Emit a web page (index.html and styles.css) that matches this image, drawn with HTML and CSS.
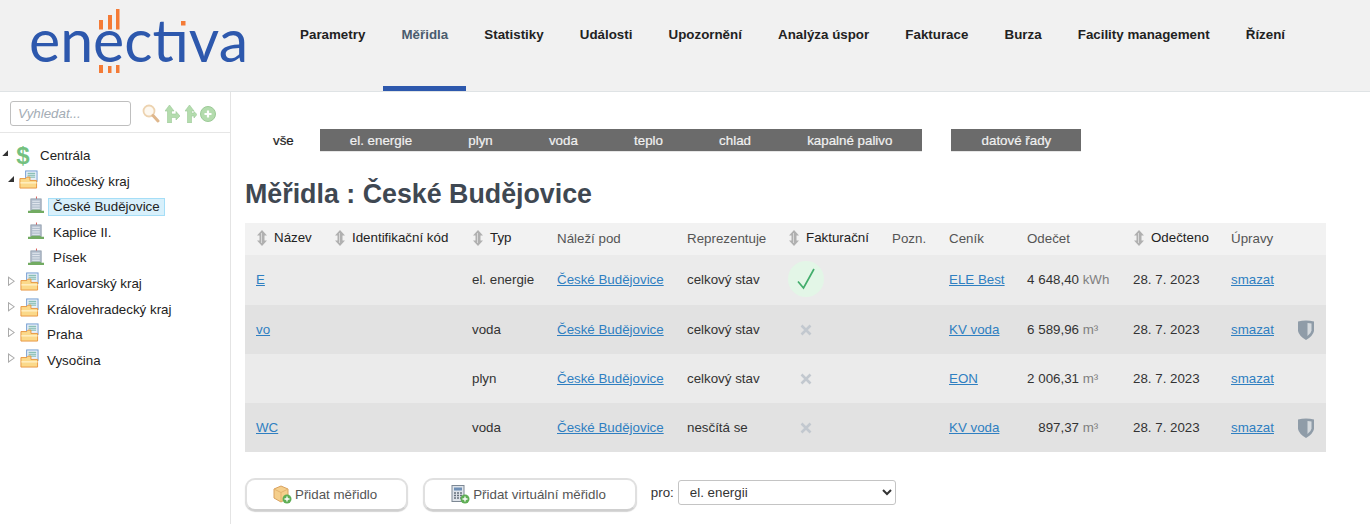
FILE: index.html
```html
<!DOCTYPE html>
<html lang="cs">
<head>
<meta charset="utf-8">
<title>Měřidla : České Budějovice</title>
<link rel="stylesheet" href="styles.css">
</head>
<body>
<svg class="defs" width="0" height="0" aria-hidden="true">
  <symbol id="sort" viewBox="0 0 12 16">
    <path d="M6 0 11 5.500H8.500v5H11L6 16 1 10.500H3.500v-5H1Z" fill="#b0b0b0"/>
    <path d="M5.500 3v10" stroke="#d8d8d8" stroke-width="1"/>
  </symbol>
  <symbol id="folder" viewBox="0 0 20 20">
    <rect x="7" y="1" width="12" height="11" fill="#e8f0fa" stroke="#6f9bd0"/>
    <path d="M9 3.500h8M9 5.500h8M9 7.500h8" stroke="#6fb1a0"/>
    <path d="M1 9h6l1.500-1.500h3V11h7v8H1Z" fill="#fbd98a" stroke="#e8963f"/>
    <path d="M1.500 13.500h17" stroke="#fff0c4" stroke-width="1.500"/>
  </symbol>
  <symbol id="building" viewBox="0 0 17 18">
    <path d="M9 0v3" stroke="#d9534f"/>
    <rect x="3" y="2.500" width="11" height="13" fill="#b3bfcd" stroke="#8a97a6" stroke-width=".8"/>
    <path d="M4.500 5h8M4.500 7.500h8M4.500 10h8M4.500 12.500h8" stroke="#e6ecf2"/>
    <path d="M0 17.500h17v-2.500h-3l-1-1H4l-1 1H0Z" fill="#72ab62"/>
  </symbol>
  <symbol id="shield" viewBox="0 0 16 20">
    <path d="M0 1.500Q8-.5 16 1.500V11Q15 16 8 20 1 16 0 11Z" fill="#8f9ca8"/>
    <path d="M9.500 3Q12 3 13.500 3.500V10.500Q13 13.500 9.500 16Z" fill="#d5dade"/>
  </symbol>
  <symbol id="cross" viewBox="0 0 12 12">
    <path d="M1.500 1.500 10.500 10.500M10.500 1.500 1.500 10.500" stroke="#c2c8cf" stroke-width="2.600"/>
  </symbol>
</svg>

<header class="top">
  <a class="logo" href="#">
    <svg width="282" height="91" viewBox="0 0 282 91" role="img" aria-label="Enectiva">
      <text x="29" y="62" class="logo-word" textLength="219" lengthAdjust="spacingAndGlyphs">enectiva</text>
      <rect x="176" y="14" width="14" height="14" fill="#f1f1f1"/>
      <rect x="181" y="21" width="4.500" height="4.500" fill="#f47b36"/>
      <path d="M99 20h4v9.500h-4ZM108 15h4v14.500h-4ZM116 9h3.500v20.500H116ZM99 65h4v8h-4ZM108 66h3.500v7H108ZM116 65h3.500v8H116Z" fill="#f47b36"/>
    </svg>
  </a>
  <nav class="menu">
    <a href="#">Parametry</a>
    <a href="#" class="active">Měřidla</a>
    <a href="#">Statistiky</a>
    <a href="#">Události</a>
    <a href="#">Upozornění</a>
    <a href="#">Analýza úspor</a>
    <a href="#">Fakturace</a>
    <a href="#">Burza</a>
    <a href="#">Facility management</a>
    <a href="#">Řízení</a>
  </nav>
</header>

<div class="page">
  <aside class="side">
    <div class="search">
      <input class="search-input" type="text" placeholder="Vyhledat...">
      <div class="tools">
        <svg width="18" height="19" viewBox="0 0 18 19"><circle cx="7" cy="7" r="5.500" fill="#fdf8f0" stroke="#edd3b0" stroke-width="1.800"/><path d="M11 11.500 16 17" stroke="#dfb78c" stroke-width="3" stroke-linecap="round"/></svg>
        <svg class="t1" width="15" height="18" viewBox="0 0 15 18"><path d="M4.500 0 9 6H6.500V9H11V6.500L15 11 11 15V12.500H6.500V18H2.500V6H0Z" fill="#b4dcae" stroke="#9cca97" stroke-width=".6"/></svg>
        <svg class="t2" width="12" height="18" viewBox="0 0 12 18"><path d="M4.500 0 9 6H6.500V8H9V6.500L12 9.500 9 13V11H6.500V18H2.500V6H0Z" fill="#b4dcae" stroke="#9cca97" stroke-width=".6"/></svg>
        <svg class="t3" width="16" height="16" viewBox="0 0 16 16"><circle cx="8" cy="8" r="7.500" fill="#b4dcae" stroke="#9cca97"/><path d="M8 4.500v7M4.500 8h7" stroke="#fff" stroke-width="2.200"/></svg>
      </div>
    </div>
    <div class="tree">
      <div class="node n0"><span class="open"></span><span class="dollar">$</span><span class="label">Centrála</span></div>
      <div class="node n1"><span class="open"></span><svg class="ico"><use href="#folder"/></svg><span class="label">Jihočeský kraj</span></div>
      <div class="node n2"><svg class="bld"><use href="#building"/></svg><span class="label selected">České Budějovice</span></div>
      <div class="node n2"><svg class="bld"><use href="#building"/></svg><span class="label">Kaplice II.</span></div>
      <div class="node n2"><svg class="bld"><use href="#building"/></svg><span class="label">Písek</span></div>
      <div class="node n1"><span class="closed"></span><svg class="ico"><use href="#folder"/></svg><span class="label">Karlovarský kraj</span></div>
      <div class="node n1"><span class="closed"></span><svg class="ico"><use href="#folder"/></svg><span class="label">Královehradecký kraj</span></div>
      <div class="node n1"><span class="closed"></span><svg class="ico"><use href="#folder"/></svg><span class="label">Praha</span></div>
      <div class="node n1"><span class="closed"></span><svg class="ico"><use href="#folder"/></svg><span class="label">Vysočina</span></div>
    </div>
  </aside>

  <main class="main">
    <div class="tabs">
      <a href="#" class="tab-all">vše</a>
      <div class="tab-bar">
        <a href="#">el. energie</a><a href="#">plyn</a><a href="#">voda</a><a href="#">teplo</a><a href="#">chlad</a><a href="#">kapalné palivo</a>
      </div>
      <div class="tab-bar second"><a href="#">datové řady</a></div>
    </div>

    <h1 class="title">Měřidla : České Budějovice</h1>

    <table class="grid">
      <colgroup>
        <col class="c1"><col class="c2"><col class="c3"><col class="c4"><col class="c5"><col class="c6"><col class="c7"><col class="c8"><col class="c9"><col class="c10"><col class="c11"><col class="c12">
      </colgroup>
      <thead>
        <tr>
          <th class="sortable"><svg class="sort"><use href="#sort"/></svg>Název</th>
          <th class="sortable"><svg class="sort"><use href="#sort"/></svg>Identifikační kód</th>
          <th class="sortable"><svg class="sort"><use href="#sort"/></svg>Typ</th>
          <th>Náleží pod</th>
          <th>Reprezentuje</th>
          <th class="sortable"><svg class="sort"><use href="#sort"/></svg>Fakturační</th>
          <th>Pozn.</th>
          <th>Ceník</th>
          <th>Odečet</th>
          <th class="sortable"><svg class="sort"><use href="#sort"/></svg>Odečteno</th>
          <th>Úpravy</th>
          <th></th>
        </tr>
      </thead>
      <tbody>
        <tr class="first">
          <td><a href="#">E</a></td><td></td><td>el. energie</td><td><a href="#">České Budějovice</a></td><td>celkový stav</td>
          <td class="mark"><span class="yes"><svg width="20" height="24" viewBox="0 0 20 24"><path d="M2 14.500 7.500 21 18 2" fill="none" stroke="#43ad6c" stroke-width="1.700"/></svg></span></td>
          <td></td><td><a href="#">ELE Best</a></td><td><span class="num">4 648,40</span> <span class="unit">kWh</span></td><td>28. 7. 2023</td><td><a href="#">smazat</a></td><td></td>
        </tr>
        <tr>
          <td><a href="#">vo</a></td><td></td><td>voda</td><td><a href="#">České Budějovice</a></td><td>celkový stav</td>
          <td class="mark"><svg class="no"><use href="#cross"/></svg></td>
          <td></td><td><a href="#">KV voda</a></td><td><span class="num">6 589,96</span> <span class="unit">m³</span></td><td>28. 7. 2023</td><td><a href="#">smazat</a></td><td class="lock"><svg class="shield"><use href="#shield"/></svg></td>
        </tr>
        <tr>
          <td></td><td></td><td>plyn</td><td><a href="#">České Budějovice</a></td><td>celkový stav</td>
          <td class="mark"><svg class="no"><use href="#cross"/></svg></td>
          <td></td><td><a href="#">EON</a></td><td><span class="num">2 006,31</span> <span class="unit">m³</span></td><td>28. 7. 2023</td><td><a href="#">smazat</a></td><td></td>
        </tr>
        <tr class="last">
          <td><a href="#">WC</a></td><td></td><td>voda</td><td><a href="#">České Budějovice</a></td><td>nesčítá se</td>
          <td class="mark"><svg class="no"><use href="#cross"/></svg></td>
          <td></td><td><a href="#">KV voda</a></td><td><span class="num">897,37</span> <span class="unit">m³</span></td><td>28. 7. 2023</td><td><a href="#">smazat</a></td><td class="lock"><svg class="shield"><use href="#shield"/></svg></td>
        </tr>
      </tbody>
    </table>

    <div class="actions">
      <a href="#" class="btn">
        <svg width="19" height="19" viewBox="0 0 19 19"><path d="M8 1 15 4V13L8 17 1 13V4Z" fill="#f5cf8c" stroke="#d9a25f"/><path d="M1 4 8 7.500 15 4M8 7.500V17" fill="none" stroke="#e3b36f"/><circle cx="14" cy="14" r="4.500" fill="#5fae55"/><path d="M14 11.500v5M11.500 14h5" stroke="#fff" stroke-width="1.300"/></svg>
        Přidat měřidlo
      </a>
      <a href="#" class="btn">
        <svg width="19" height="19" viewBox="0 0 19 19"><rect x="1" y="0.500" width="12" height="16" fill="#dfe4ea" stroke="#7d8894"/><rect x="3" y="2.500" width="8" height="3" fill="#6f8fb5"/><path d="M3 8h2M6 8h2M9 8h2M3 10.500h2M6 10.500h2M9 10.500h2M3 13h2M6 13h2M9 13h2" stroke="#66707c" stroke-width="1.300"/><circle cx="14" cy="14" r="4.500" fill="#5fae55"/><path d="M14 11.500v5M11.500 14h5" stroke="#fff" stroke-width="1.300"/></svg>
        Přidat virtuální měřidlo
      </a>
      <label class="pick">pro:
        <select class="pick-select"><option>el. energii</option></select>
      </label>
    </div>
  </main>
</div>
</body>
</html>
```

FILE: styles.css
```css
* { box-sizing: border-box; }
html, body { height: 100%; }
body {
  margin: 0;
  overflow: hidden;
  display: flex;
  flex-direction: column;
  background: #fff;
  color: #333;
  font-family: "Liberation Sans", Arial, sans-serif;
  font-size: 13.33px;
}
.defs { position: absolute; }
a { color: inherit; text-decoration: none; }

/* header */
.top {
  display: flex;
  height: 92px;
  flex: none;
  background: #f1f1f1;
  border-bottom: 1px solid #dfe3e5;
}
.logo { display: block; width: 282px; height: 91px; flex: none; }
.logo-word {
  font-family: Lato, "Open Sans", sans-serif;
  font-size: 60px;
  font-weight: 400;
  fill: #2d58ad;
}
.menu { display: flex; }
.menu a {
  height: 91px;
  padding: 27px 18.1px 0;
  font-weight: 700;
  color: #222;
  line-height: 16px;
}
.menu a.active {
  color: #4a5c6e;
  border-bottom: 5px solid #2d58ad;
}

/* layout */
.page { display: flex; flex: 1; min-height: 0; }
.side {
  width: 231px;
  flex: none;
  border-right: 1px solid #e4e4e4;
}
.search {
  display: flex;
  align-items: center;
  height: 41px;
  padding: 3px 0 0 10px;
  border-bottom: 1px solid #e6e6e6;
}
.search-input {
  width: 121px;
  height: 25px;
  padding: 0 7px;
  border: 1px solid #bfbfbf;
  border-radius: 3px;
  font: italic 13.33px "Liberation Sans", Arial, sans-serif;
}
.search-input::placeholder { color: #a3acb5; opacity: 1; }
.tools { display: flex; align-items: center; margin-left: 11px; }
.tools .t1 { margin-left: 5px; }
.tools .t2 { margin-left: 5px; }
.tools .t3 { margin-left: 3px; }

/* tree */
.tree { padding-top: 10px; }
.node {
  display: flex;
  align-items: center;
  height: 25.6px;
  color: #222;
  white-space: nowrap;
}
.n0 { padding-left: 2px; }
.n1 { padding-left: 8px; }
.n2 { padding-left: 28px; }
.open {
  width: 6px;
  height: 6px;
  flex: none;
  margin-top: -5px;
  background: #333;
  clip-path: polygon(100% 0, 100% 100%, 0 100%);
}
.closed {
  width: 7px;
  height: 10px;
  flex: none;
  margin-top: -5px;
  background: #aaa;
  clip-path: polygon(0 0, 100% 50%, 0 100%, 0 0, 1px 2px, 1px 8px, 5.500px 50%, 1px 2px);
}
.dollar {
  width: 16px;
  margin-left: 7px;
  color: #74c17f;
  font-size: 24px;
  font-weight: 700;
  line-height: 25px;
  text-align: center;
}
.n0 .label { margin-left: 9px; }
.ico { width: 19px; height: 19px; margin-left: 5px; flex: none; margin-top: -4px; }
.n1 .label { margin-left: 8px; }
.bld { width: 16px; height: 18px; flex: none; margin-top: -3px; }
.n2 .label { margin-left: 4px; padding: 0 4px; border: 1px solid transparent; line-height: 16px; }
.n2 .selected { background: #d8f0fb; border-color: #a5def7; }

/* main */
.main { flex: 1; padding: 37px 0 0 14px; min-width: 0; }
.tabs { display: flex; height: 23px; line-height: 23px; }
.tab-all { padding: 0 26px 0 28px; color: #222; -webkit-text-stroke: .2px #222; }
.tab-bar {
  display: flex;
  padding: 0 2px;
  background: #6b6b6b;
  border: 1px solid #e6e6e6;
  border-width: 0 0 1px;
  color: #f1f1f1;
  -webkit-text-stroke: .2px #f1f1f1;
}
.tab-bar a { padding: 0 28.1px; }
.tab-bar.second { margin-left: 29px; }
.title {
  margin: 27px 0 13px;
  font-size: 26.8px;
  line-height: 31px;
  font-weight: 700;
  color: #3f4852;
}

/* table */
.grid {
  width: 1081px;
  table-layout: fixed;
  border-collapse: collapse;
  border-spacing: 0;
}
.c1 { width: 78px; } .c2 { width: 138px; } .c3 { width: 85px; } .c4 { width: 130px; }
.c5 { width: 101px; } .c6 { width: 104px; } .c7 { width: 57px; } .c8 { width: 78px; }
.c9 { width: 106px; } .c10 { width: 98px; } .c11 { width: 67px; } .c12 { width: 39px; }
.grid th, .grid td { padding: 0 0 1px 11px; text-align: left; white-space: nowrap; }
.grid th {
  height: 32px;
  padding-bottom: 2px;
  background: #f2f2f2;
  color: #555;
  font-weight: 400;
}
.grid th.sortable { color: #222; }
.sort { width: 12px; height: 16px; margin-right: 6px; vertical-align: -4px; }
.grid td { height: 49px; color: #333; }
.grid tr.first td { height: 50px; padding-bottom: 2px; }
.grid tr.last td { padding-bottom: 0; }
.grid tbody tr:nth-child(odd) td { background: #ebebeb; }
.grid tbody tr:nth-child(even) td { background: #e2e2e2; }
.grid td a { color: #2f7fc1; text-decoration: underline; }
.num { display: inline-block; width: 52px; text-align: right; }
.unit { color: #808080; }
.grid td.mark { line-height: 0; padding-bottom: 0; }
.yes {
  display: inline-flex;
  align-items: center;
  justify-content: center;
  width: 36px;
  height: 36px;
  border-radius: 50%;
  background: #e3f6e7;
}
.no { width: 12px; height: 12px; margin-left: 12px; }
.grid td.lock { line-height: 0; padding-bottom: 0; }
.shield { width: 16px; height: 20px; }

/* actions */
.actions { display: flex; align-items: center; margin-top: 26px; }
.btn {
  display: flex;
  align-items: center;
  gap: 3px;
  height: 33px;
  padding: 0 29px 0 26px;
  background: #fff;
  border: 2px solid #e0e0e0;
  border-bottom-color: #cfcfcf;
  border-radius: 10px;
  box-shadow: 0 1px 1px #d4d4d4;
  color: #555;
  margin-right: 15px;
}
.pick { display: flex; align-items: center; gap: 4px; color: #333; margin: -4px 0 0 -1px; }
.pick-select {
  width: 218px;
  height: 25px;
  padding-left: 7px;
  background: #fff;
  border: 1px solid #c4c4c4;
  border-radius: 3px;
  color: #333;
  font: 13.33px "Liberation Sans", Arial, sans-serif;
}
```
